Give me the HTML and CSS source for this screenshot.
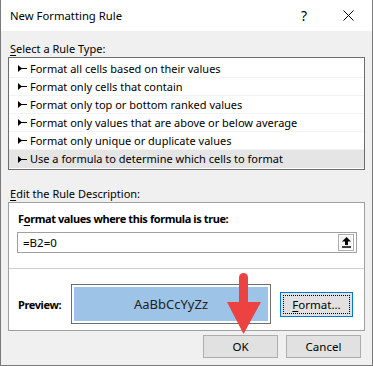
FILE: index.html
```html
<!DOCTYPE html>
<html lang="en">
<head>
<meta charset="utf-8">
<title>New Formatting Rule</title>
<link rel="stylesheet" href="styles.css">
</head>
<body>
<div class="dialog">
	<div class="titlebar">
		<span class="title">New Formatting Rule</span>
		<span class="help">?</span>
		<span class="close"><svg width="11" height="11" viewBox="0 0 11 11"><path d="M0.5 0.5L10.5 10.5M10.5 0.5L0.5 10.5" stroke="#000" stroke-width="1" fill="none"/></svg></span>
	</div>
	<div class="dlg_body">
		<div class="label"><u>S</u>elect a Rule Type:</div>
		<ul class="rules">
			<li><svg class="tack" width="9" height="7" viewBox="0 0 9 7"><path d="M0 0L4 3.5L0 7Z" fill="#000"/><path d="M0 3.5H9" stroke="#000" stroke-width="1"/></svg>Format all cells based on their values</li>
			<li><svg class="tack" width="9" height="7" viewBox="0 0 9 7"><path d="M0 0L4 3.5L0 7Z" fill="#000"/><path d="M0 3.5H9" stroke="#000" stroke-width="1"/></svg>Format only cells that contain</li>
			<li><svg class="tack" width="9" height="7" viewBox="0 0 9 7"><path d="M0 0L4 3.5L0 7Z" fill="#000"/><path d="M0 3.5H9" stroke="#000" stroke-width="1"/></svg>Format only top or bottom ranked values</li>
			<li><svg class="tack" width="9" height="7" viewBox="0 0 9 7"><path d="M0 0L4 3.5L0 7Z" fill="#000"/><path d="M0 3.5H9" stroke="#000" stroke-width="1"/></svg>Format only values that are above or below average</li>
			<li><svg class="tack" width="9" height="7" viewBox="0 0 9 7"><path d="M0 0L4 3.5L0 7Z" fill="#000"/><path d="M0 3.5H9" stroke="#000" stroke-width="1"/></svg>Format only unique or duplicate values</li>
			<li class="sel"><svg class="tack" width="9" height="7" viewBox="0 0 9 7"><path d="M0 0L4 3.5L0 7Z" fill="#000"/><path d="M0 3.5H9" stroke="#000" stroke-width="1"/></svg>Use a formula to determine which cells to format</li>
		</ul>
		<div class="label edit"><u>E</u>dit the Rule Description:</div>
		<div class="group">
			<div class="formula">
				<div class="bold">F<u>o</u>rmat values where this formula is true:</div>
				<div class="input">
					<span class="value">=B2=0</span>
					<span class="refbtn"><svg width="9" height="11" viewBox="0 0 9 11"><path d="M4.5 0L9 4.5H6V8H3V4.5H0Z" fill="#000"/><path d="M0 10H9" stroke="#000" stroke-width="1.5"/></svg></span>
				</div>
			</div>
			<div class="preview_row">
				<span class="bold prev_label">Preview:</span>
				<div class="preview"><div class="sample">AaBbCcYyZz</div></div>
				<div class="btn focus"><span class="dots"><u>F</u>ormat...</span></div>
			</div>
		</div>
		<div class="actions">
			<div class="btn">OK</div>
			<div class="btn">Cancel</div>
		</div>
	</div>
	<svg class="arrow" width="38" height="66" viewBox="0 0 38 66">
		<path d="M14 7.5a4.5 4.5 0 0 1 9 0V34h-9Z" fill="#ec4242"/>
		<path d="M2 32H36L18.5 64Z" fill="#ec4242"/>
	</svg>
</div>
</body>
</html>
```

FILE: styles.css
```css
html,body{margin:0;padding:0;}
body{font-family:"Noto Sans","Open Sans",sans-serif;font-size:11px;color:#000;background:#fff;}
u{text-decoration:underline;text-underline-offset:2px;}
.dialog{position:relative;width:373px;height:366px;box-sizing:border-box;border:1px solid #7a7a7a;border-top:0;background:#f0f0f0;}
.titlebar{height:31px;background:#fff;display:flex;align-items:center;padding-left:9px;font-size:11.3px;}
.title{flex:1;}
.help{width:20px;font-size:14px;margin-right:22px;}
.close{width:11px;height:11px;margin-right:18px;display:flex;}
.dlg_body{padding:0 7px;}
.label{padding:10px 0 0 2px;height:15px;line-height:15px;}
.rules{list-style:none;margin:1px 0 0;padding:2px 0 1px;border:1px solid #6e6e6e;background:#fff;}
.rules li{height:18px;line-height:18px;box-sizing:border-box;padding-left:9px;display:flex;align-items:center;border-bottom:1px solid #f3f3f3;}
.rules li.sel{background:#e5e5e5;border-bottom:0;}
.tack{margin-right:3px;flex:none;}
.label.edit{padding-top:16px;}
.group{margin-top:1px;border:1px solid #a0a0a0;background:#fff;}
.formula{padding:8px 7px 15px 9px;border-bottom:1px solid #cfcfcf;}
.bold{font-weight:bold;font-size:11px;letter-spacing:-0.4px;line-height:15px;}
.input{margin:6px 0 0 -1px;height:21px;box-sizing:border-box;border:1px solid #a0a0a0;display:flex;align-items:center;padding:0 2px 0 5px;font-size:11.5px;}
.value{flex:1;}
.refbtn{width:16px;height:17px;box-sizing:border-box;border:1px solid #adadad;background:#f3f3f3;display:flex;align-items:center;justify-content:center;box-shadow:inset 0 0 0 1px #fff;}
.preview_row{display:flex;align-items:center;padding:15px 0 6px 9px;}
.prev_label{width:53px;}
.preview{width:200px;height:40px;box-sizing:border-box;border:1px solid #6e6e6e;padding:2px;background:#fff;}
.sample{height:100%;background:#9dc3e6;display:flex;align-items:center;justify-content:center;font-size:13px;color:#222;}
.btn{height:23px;box-sizing:border-box;border:1px solid #adadad;background:#e1e1e1;display:flex;align-items:center;justify-content:center;font-size:11.5px;}
.focus{width:73px;height:25px;margin-left:9px;border:1px solid #0078d7;padding:2px;}
.dots{width:100%;height:100%;box-sizing:border-box;border:1px dotted #000;display:flex;align-items:center;justify-content:center;}
.actions{display:flex;justify-content:flex-end;gap:8px;margin-top:4px;padding-right:4px;}
.actions .btn{width:75px;}
.arrow{position:absolute;left:224px;top:270px;}
```
